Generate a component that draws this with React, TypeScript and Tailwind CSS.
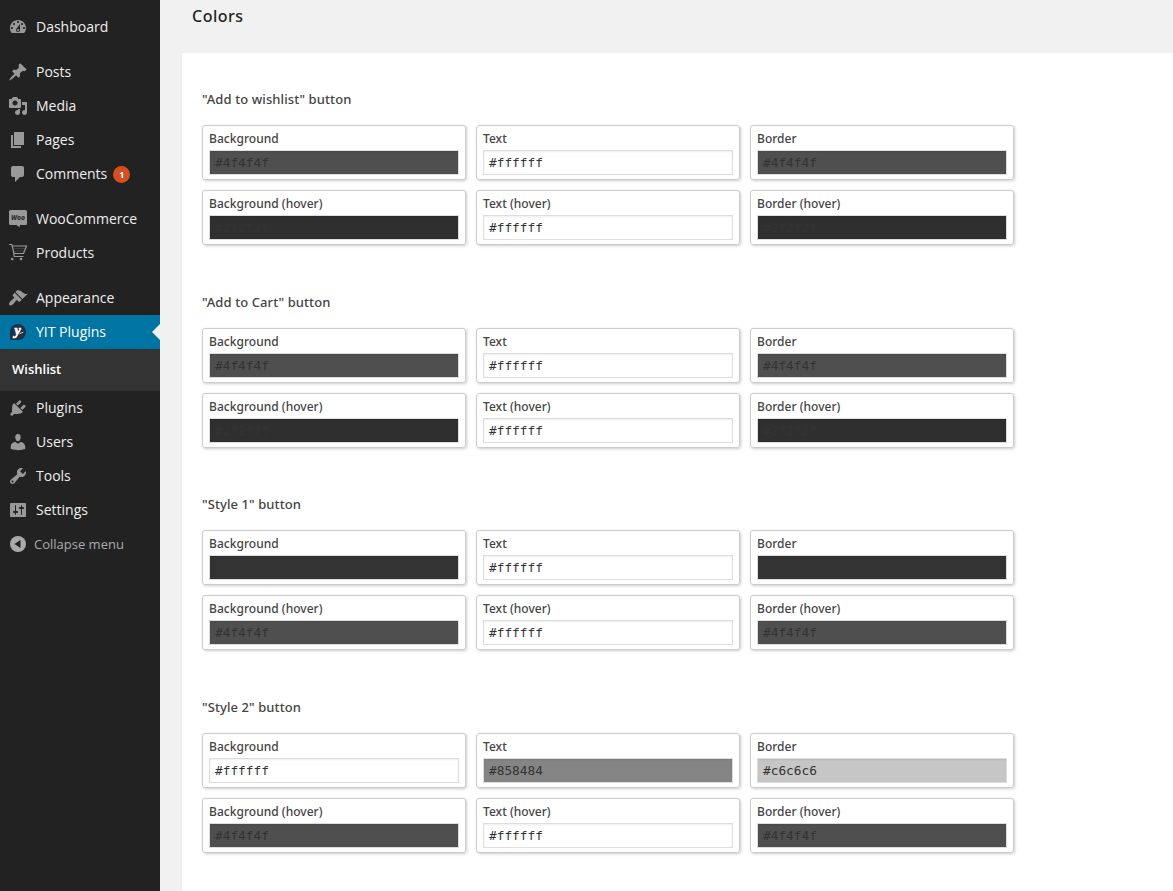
import React from "react";

const icons = {
  dashboard:
    "M3.76 16h12.48c1.1-1.37 1.76-3.11 1.76-5 0-4.42-3.58-8-8-8s-8 3.58-8 8c0 1.89.66 3.63 1.76 5zM10 4c.55 0 1 .45 1 1s-.45 1-1 1-1-.45-1-1 .45-1 1-1zM6 6c.55 0 1 .45 1 1s-.45 1-1 1-1-.45-1-1 .45-1 1-1zm8 0c.55 0 1 .45 1 1s-.45 1-1 1-1-.45-1-1 .45-1 1-1zm-5.37 5.55L12 7v6c0 1.1-.9 2-2 2s-2-.9-2-2c0-.57.24-1.08.63-1.45zM4 10c.55 0 1 .45 1 1s-.45 1-1 1-1-.45-1-1 .45-1 1-1zm12 0c.55 0 1 .45 1 1s-.45 1-1 1-1-.45-1-1 .45-1 1-1zm-5 3c0-.55-.45-1-1-1s-1 .45-1 1 .45 1 1 1 1-.45 1-1z",
  posts:
    "M10.44 3.02l1.82-1.82 6.36 6.35-1.83 1.82c-1.05-.68-2.48-.57-3.41.36l-.75.75c-.92.93-1.04 2.35-.35 3.41l-1.83 1.82-2.41-2.41-2.8 2.79c-.42.42-3.38 2.71-3.8 2.29s1.86-3.39 2.28-3.81l2.79-2.79L4.1 9.36l1.83-1.82c1.05.69 2.48.57 3.4-.36l.75-.75c.93-.92 1.05-2.35.36-3.41z",
  media:
    "M13 11V4c0-.55-.45-1-1-1h-1.67L9 1H5L3.67 3H2c-.55 0-1 .45-1 1v7c0 .55.45 1 1 1h10c.55 0 1-.45 1-1zM7 4.5c1.38 0 2.5 1.12 2.5 2.5S8.38 9.5 7 9.5 4.5 8.38 4.5 7 5.62 4.5 7 4.5zM14 6h5v10.5c0 1.38-1.12 2.5-2.5 2.5S14 17.88 14 16.5s1.12-2.5 2.5-2.5c.17 0 .34.02.5.05V9h-3V6zm-4 8.05V13h2v3.5c0 1.38-1.12 2.5-2.5 2.5S7 17.88 7 16.5 8.12 14 9.5 14c.17 0 .34.02.5.05z",
  pages: "M6 15V2h10v13H6zm-1 1h8v2H3V5h2v11z",
  comments:
    "M5 2h9c1.1 0 2 .9 2 2v7c0 1.1-.9 2-2 2h-2l-5 5v-5H5c-1.1 0-2-.9-2-2V4c0-1.1.9-2 2-2z",
  appearance:
    "M14.48 11.06L7.41 3.99l1.5-1.5c.5-.56 2.3-.47 3.51.32 1.21.8 1.43 1.28 2.91 2.1 1.18.64 2.45 1.26 4.45.85zm-.71.71L6.7 4.7 4.93 6.47c-.39.39-.39 1.02 0 1.41l1.06 1.06c.39.39.39 1.03 0 1.42-.6.6-1.43 1.11-2.21 1.69-.35.26-.7.53-1.01.84C1.43 14.23.4 16.08 1.4 17.07c.99 1 2.84-.03 4.18-1.36.31-.31.58-.66.85-1.02.57-.78 1.08-1.61 1.69-2.21.39-.39 1.02-.39 1.41 0l1.06 1.06c.39.39 1.02.39 1.41 0z",
  plugins:
    "M13.11 4.36L9.87 7.6 8 5.73l3.24-3.24c.35-.34 1.05-.2 1.56.32.52.51.66 1.21.31 1.55zm-8 1.77l.91-1.12 9.01 9.01-1.19.84c-.71.71-2.63 1.16-3.82 1.16H6.14L4.9 17.26c-.59.59-1.54.59-2.12 0-.59-.58-.59-1.53 0-2.12l1.24-1.24v-3.88c0-1.13.4-3.19 1.09-3.89zm7.26 3.97l3.24-3.24c.34-.35 1.04-.21 1.55.31.52.51.66 1.21.31 1.55l-3.24 3.25z",
  users:
    "M10 9.25c-2.27 0-2.73-3.44-2.73-3.44C7 4.02 7.82 2 9.97 2c2.16 0 2.98 2.02 2.71 3.81 0 0-.41 3.44-2.68 3.44zm0 2.57L12.72 10c2.39 0 4.52 2.33 4.52 4.53v2.49s-3.65 1.13-7.24 1.13c-3.65 0-7.24-1.13-7.24-1.13v-2.49c0-2.25 1.94-4.48 4.47-4.48z",
  tools:
    "M16.68 9.77c-1.34 1.34-3.3 1.67-4.95.99l-5.41 6.52c-.99.99-2.59.99-3.58 0s-.99-2.59 0-3.57l6.52-5.42c-.68-1.65-.35-3.61.99-4.95 1.28-1.28 3.12-1.62 4.72-1.06l-2.89 2.89 2.82 2.82 2.86-2.87c.53 1.58.18 3.39-1.08 4.65zM3.81 16.21c.4.39 1.04.39 1.43 0 .4-.4.4-1.04 0-1.43-.39-.4-1.03-.4-1.43 0-.39.39-.39 1.03 0 1.43z",
  settings:
    "M18 16V4c0-.55-.45-1-1-1H3c-.55 0-1 .45-1 1v12c0 .55.45 1 1 1h14c.55 0 1-.45 1-1zM8 11h1c.55 0 1 .45 1 1s-.45 1-1 1H8v1.5c0 .28-.22.5-.5.5s-.5-.22-.5-.5V13H6c-.55 0-1-.45-1-1s.45-1 1-1h1V5.5c0-.28.22-.5.5-.5s.5.22.5.5V11zm5-2h-1c-.55 0-1-.45-1-1s.45-1 1-1h1V5.5c0-.28.22-.5.5-.5s.5.22.5.5V7h1c.55 0 1 .45 1 1s-.45 1-1 1h-1v5.5c0 .28-.22.5-.5.5s-.5-.22-.5-.5V9z",
};

function Glyph({ d }: { d: string }) {
  return (
    <svg viewBox="0 0 20 20" className="size-5 fill-[#999]" fillRule="evenodd">
      <path d={d} />
    </svg>
  );
}

function WooIcon() {
  return (
    <svg viewBox="0 0 20 20" className="size-5">
      <path d="M2.500 1h15A1.500 1.500 0 0 1 19 2.500v12a1.500 1.500 0 0 1-1.500 1.500h-5.500l-.500 2.200-3-2.200H2.500A1.500 1.500 0 0 1 1 14.500v-12A1.500 1.500 0 0 1 2.500 1z" fill="#999" />
      <text x="10" y="11" textAnchor="middle" fontSize="7.500" fontWeight="bold" fontStyle="italic" fontFamily="Open Sans" fill="#222" textLength="14" lengthAdjust="spacingAndGlyphs">
        Woo
      </text>
    </svg>
  );
}

function CartIcon() {
  return (
    <svg viewBox="0 0 20 20" className="size-5" fill="none" stroke="#999" strokeWidth="1.200">
      <path d="M1 1.500h2.800L6 10.500h9.500l3-7.500H4.500M5.500 9l.8 4.500h9.200" />
      <path d="M6 5.500h11M6 8h10" strokeWidth=".5" opacity=".5" />
      <circle cx="4.200" cy="16" r="1.300" fill="#999" stroke="none" />
      <circle cx="13" cy="16" r="1.300" fill="#999" stroke="none" />
    </svg>
  );
}

function YitIcon() {
  return (
    <svg viewBox="0 0 20 20" className="size-5 overflow-visible">
      <path d="M10 2a8 8 0 1 1 0 16H3.500A1.500 1.500 0 0 1 2 16.500V10a8 8 0 0 1 8-8z" fill="#1f3048" />
      <text x="9.500" y="12.500" textAnchor="middle" fontSize="14" fontWeight="bold" fontStyle="italic" fontFamily="Liberation Serif, serif" fill="#fff" stroke="#fff" strokeWidth=".7">
        y
      </text>
      <path d="M11.500 11.800l3.800-1.600" stroke="#fff" strokeWidth=".8" />
    </svg>
  );
}

type ItemProps = { label: string; icon: React.ReactNode; active?: boolean; badge?: string };

function MenuItem({ label, icon, active, badge }: ItemProps) {
  return (
    <a className={`relative flex h-[34px] items-center pl-2 text-sm leading-[18px] ${active ? "bg-[#0074a2] text-white" : "text-[#eee]"}`}>
      <span className="flex w-7 shrink-0">{icon}</span>
      <span>{label}</span>
      {badge && (
        <span className="ml-1.5 mt-px flex size-[17px] items-center justify-center rounded-full bg-[#d54e21] text-[9px] font-bold leading-none text-white">
          {badge}
        </span>
      )}
      {active && (
        <span className="absolute right-0 top-[9px] border-y-8 border-r-8 border-y-transparent border-r-[#f1f1f1]" />
      )}
    </a>
  );
}

function Sidebar() {
  return (
    <nav className="flex w-40 shrink-0 flex-col bg-[#222] pt-2.5">
      <MenuItem label="Dashboard" icon={<Glyph d={icons.dashboard} />} />
      <div className="mt-[11px]">
        <MenuItem label="Posts" icon={<Glyph d={icons.posts} />} />
        <MenuItem label="Media" icon={<Glyph d={icons.media} />} />
        <MenuItem label="Pages" icon={<Glyph d={icons.pages} />} />
        <MenuItem label="Comments" icon={<Glyph d={icons.comments} />} badge="1" />
      </div>
      <div className="mt-[11px]">
        <MenuItem label="WooCommerce" icon={<WooIcon />} />
        <MenuItem label="Products" icon={<CartIcon />} />
      </div>
      <div className="mt-[11px]">
        <MenuItem label="Appearance" icon={<Glyph d={icons.appearance} />} />
        <MenuItem label="YIT Plugins" icon={<YitIcon />} active />
        <div className="flex h-[42px] items-center bg-[#333] px-3 text-[13px] font-semibold text-white">Wishlist</div>
        <MenuItem label="Plugins" icon={<Glyph d={icons.plugins} />} />
        <MenuItem label="Users" icon={<Glyph d={icons.users} />} />
        <MenuItem label="Tools" icon={<Glyph d={icons.tools} />} />
        <MenuItem label="Settings" icon={<Glyph d={icons.settings} />} />
      </div>
      <div className="flex h-[34px] items-center pl-2 text-[13px] text-[#aaa]">
        <svg viewBox="0 0 20 20" className="mr-1.5 size-5">
          <circle cx="10" cy="10" r="8" fill="#aaa" />
          <path d="M12.500 6v8l-6-4z" fill="#222" />
        </svg>
        <span className="pt-0.5">Collapse menu</span>
      </div>
    </nav>
  );
}

function ColorField({ label, value }: { label: string; value: string }) {
  return (
    <div className="h-[55px] rounded-[3px] border border-[#ccc] px-1.5 pt-1 shadow-[1px_1px_3px_#ccc]">
      <div className="h-5 font-['Noto_Sans','Open_Sans',sans-serif] text-xs leading-[18px] font-medium tracking-[0.03px] text-[#444]">{label}</div>
      <div
        className="flex h-[25px] items-center border border-[#ddd] px-[5px] font-['DejaVu_Sans_Mono',monospace] text-[12.8px] text-[#333] shadow-[inset_0_1px_2px_rgba(0,0,0,0.07)]"
        style={{ backgroundColor: value }}
      >
        {value}
      </div>
    </div>
  );
}

const labels = ["Background", "Text", "Border", "Background (hover)", "Text (hover)", "Border (hover)"];

const sections = [
  { title: '"Add to wishlist" button', values: ["#4f4f4f", "#ffffff", "#4f4f4f", "#2f2f2f", "#ffffff", "#2f2f2f"] },
  { title: '"Add to Cart" button', values: ["#4f4f4f", "#ffffff", "#4f4f4f", "#2f2f2f", "#ffffff", "#2f2f2f"] },
  { title: '"Style 1" button', values: ["#333333", "#ffffff", "#333333", "#4f4f4f", "#ffffff", "#4f4f4f"] },
  { title: '"Style 2" button', values: ["#ffffff", "#858484", "#c6c6c6", "#4f4f4f", "#ffffff", "#4f4f4f"] },
];

export default function App() {
  return (
    <div className="flex h-[891px] w-full overflow-hidden bg-[#f1f1f1] font-['Open_Sans',sans-serif]">
      <Sidebar />
      <main className="ml-[22px] flex min-w-0 flex-1 flex-col">
        <h2 className="h-9 shrink-0 border-b border-[#eee] pl-2.5 pt-1 font-['Noto_Sans','Open_Sans',sans-serif] text-base leading-6 font-medium tracking-[0.5px] text-[#222]">Colors</h2>
        <div className="mt-[17px] min-h-0 flex-1 bg-white px-5 pt-9">
          {sections.map((s) => (
            <section key={s.title} className="h-[202.600px]">
              <h3 className="h-9 font-['Noto_Sans','Open_Sans',sans-serif] text-[13px] leading-5 font-medium tracking-[0.09px] text-[#444]">{s.title}</h3>
              <div className="grid grid-cols-[264px_264px_264px] gap-2.5">
                {s.values.map((v, i) => (
                  <ColorField key={labels[i]} label={labels[i]} value={v} />
                ))}
              </div>
            </section>
          ))}
        </div>
      </main>
    </div>
  );
}
